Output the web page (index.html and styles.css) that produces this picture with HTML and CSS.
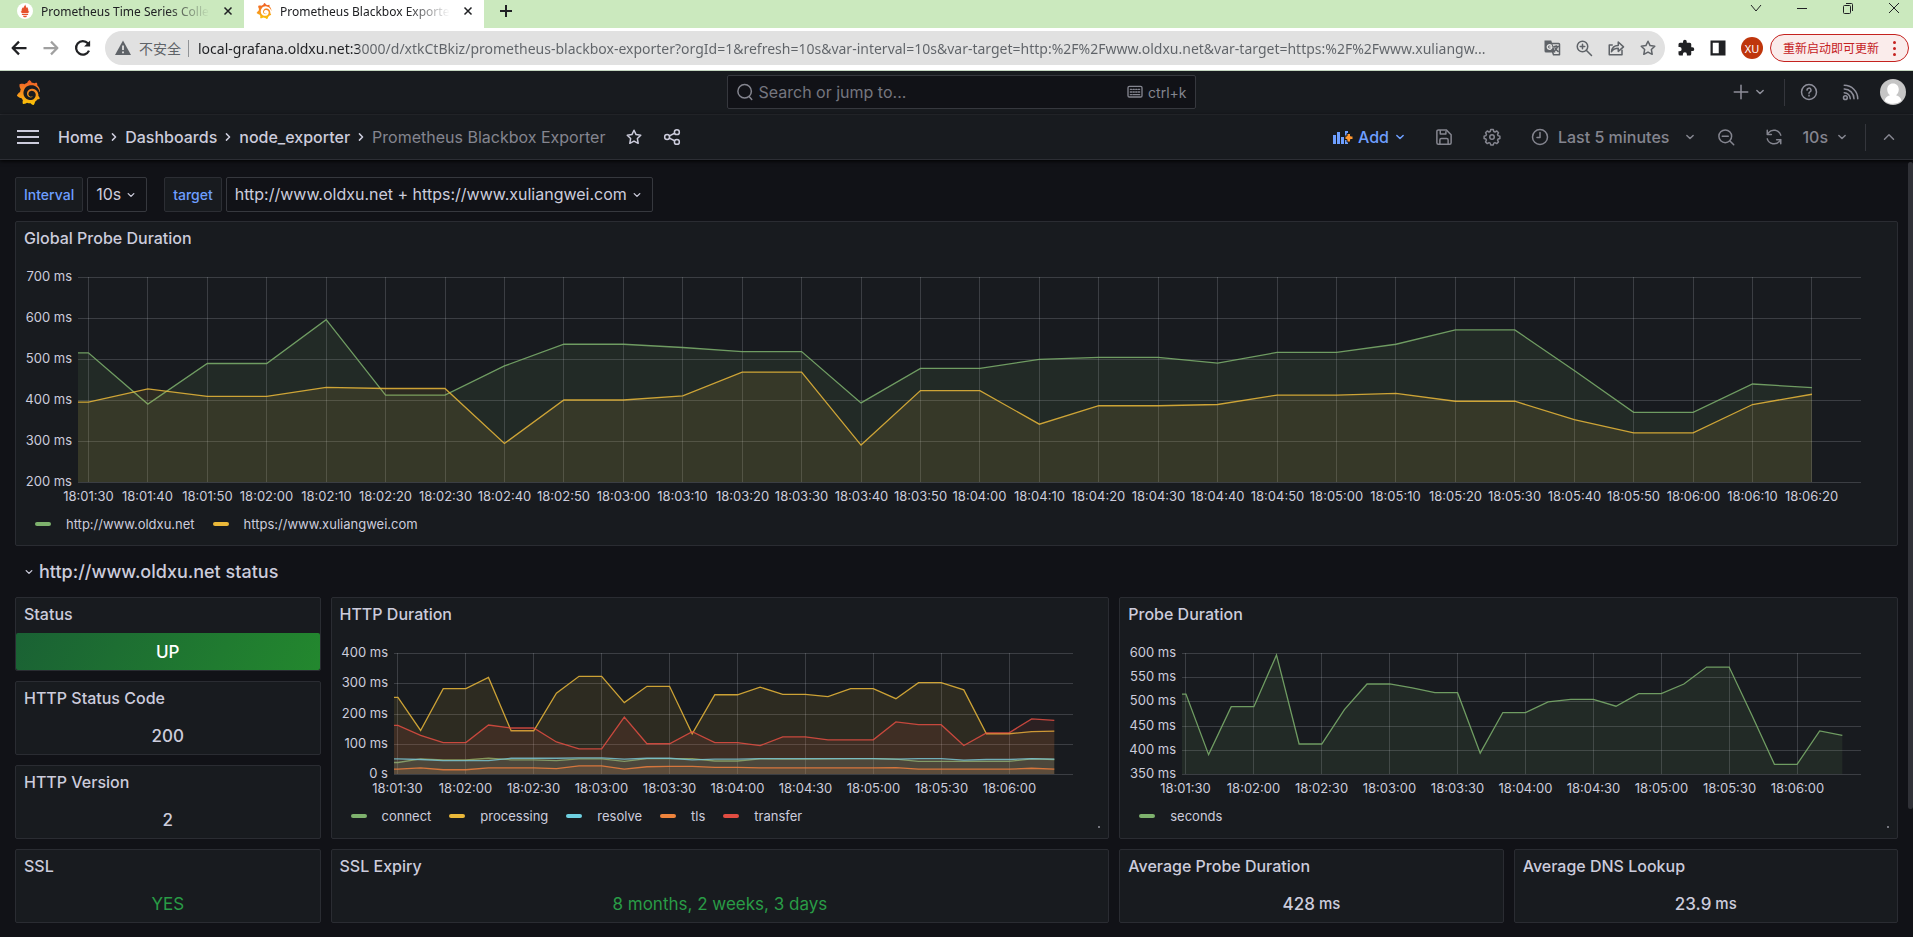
FILE: index.html
```
<!DOCTYPE html>
<html lang="en">
<head>
    <meta charset="UTF-8">
    <meta name="viewport" content="width=device-width, initial-scale=1.0">
    <title>Prometheus Blackbox Exporter</title>
    <link rel="stylesheet" href="styles.css">
</head>
<body>
    <!-- shared icons -->
    <svg class="sprite" aria-hidden="true">
        <defs>
            <linearGradient id="grafana-fill" x1="0" y1="1" x2="0" y2="0">
                <stop offset="0" stop-color="#fcc804"/>
                <stop offset="0.45" stop-color="#f7941e"/>
                <stop offset="1" stop-color="#f05a28"/>
            </linearGradient>
            <symbol id="i-grafana" viewBox="0 0 24 24"><path fill="url(#grafana-fill)" d="M23.02 10.59a8.578 8.578 0 0 0-.862-3.034 8.911 8.911 0 0 0-1.789-2.445c.337-1.342-.413-2.505-.413-2.505-1.292-.08-2.113.4-2.416.62-.052-.02-.102-.044-.154-.064-.22-.089-.446-.172-.677-.247-.231-.073-.47-.14-.711-.197a9.867 9.867 0 0 0-.875-.161C14.557.753 12.94 0 12.94 0c-1.804 1.145-2.147 2.744-2.147 2.744l-.018.093c-.098.029-.2.057-.298.088-.138.042-.275.094-.413.143-.138.055-.275.107-.41.166a8.869 8.869 0 0 0-1.557.87l-.063-.029c-2.497-.955-4.716.195-4.716.195-.203 2.658.996 4.33 1.235 4.636a11.608 11.608 0 0 0-.607 2.635C1.636 12.677.953 15.014.953 15.014c1.926 2.214 4.171 2.351 4.171 2.351.003-.002.006-.002.006-.005.285.509.615.994.986 1.446.156.19.32.371.488.548-.704 2.009.099 3.68.099 3.68 2.144.08 3.553-.937 3.849-1.173a9.784 9.784 0 0 0 3.164.501h.08l.055-.003.107-.002.103-.005.003.002c1.01 1.44 2.788 1.646 2.788 1.646 1.264-1.332 1.337-2.653 1.337-2.94v-.058c0-.02-.003-.039-.003-.06.265-.187.52-.387.758-.6a7.875 7.875 0 0 0 1.415-1.7c1.43.083 2.437-.885 2.437-.885-.236-1.49-1.085-2.216-1.264-2.354l-.018-.013-.016-.013a.217.217 0 0 1-.031-.02c.008-.092.016-.18.02-.27.011-.162.016-.323.016-.48v-.253l-.005-.098-.008-.135a1.891 1.891 0 0 0-.01-.13c-.003-.042-.008-.083-.013-.125l-.016-.124-.018-.122a6.215 6.215 0 0 0-2.032-3.73 6.015 6.015 0 0 0-3.222-1.46 6.292 6.292 0 0 0-.85-.048l-.107.002h-.063l-.044.003-.104.008a4.777 4.777 0 0 0-3.335 1.695c-.332.4-.592.84-.768 1.297a4.594 4.594 0 0 0-.312 1.817l.003.091c.005.055.007.11.013.164a3.615 3.615 0 0 0 .698 1.82 3.53 3.53 0 0 0 1.827 1.282c.33.098.66.14.971.137.039 0 .078 0 .114-.002l.063-.003c.02 0 .041-.003.062-.003.034-.002.065-.007.099-.01.007 0 .018-.003.028-.003l.031-.005.06-.008a1.18 1.18 0 0 0 .112-.02c.036-.008.072-.013.109-.024a2.634 2.634 0 0 0 .914-.415c.028-.02.056-.041.085-.065a.248.248 0 0 0 .039-.35.244.244 0 0 0-.309-.06l-.078.042c-.09.044-.184.083-.283.116a2.476 2.476 0 0 1-.475.096c-.028.003-.054.006-.083.006l-.083.002c-.026 0-.054 0-.08-.002l-.102-.006h-.012l-.024.006c-.016-.003-.031-.003-.044-.006-.031-.002-.06-.007-.091-.01a2.59 2.59 0 0 1-.724-.213 2.557 2.557 0 0 1-.667-.438 2.52 2.52 0 0 1-.805-1.475 2.306 2.306 0 0 1-.029-.444l.006-.122v-.023l.002-.031c.003-.021.003-.04.005-.06a3.163 3.163 0 0 1 1.352-2.29 3.12 3.12 0 0 1 .937-.43 2.946 2.946 0 0 1 .776-.101h.06l.07.002.045.003h.026l.07.005a4.041 4.041 0 0 1 1.635.49 3.94 3.94 0 0 1 1.602 1.662 3.77 3.77 0 0 1 .397 1.414l.005.076.003.075c.002.026.002.05.002.075 0 .024.003.052 0 .07v.065l-.002.073-.008.174a6.195 6.195 0 0 1-.08.639 5.1 5.1 0 0 1-.267.927 5.31 5.31 0 0 1-.624 1.13 5.052 5.052 0 0 1-3.237 2.014 4.82 4.82 0 0 1-.649.066l-.039.003h-.287a6.607 6.607 0 0 1-1.716-.265 6.776 6.776 0 0 1-3.4-2.274 6.75 6.75 0 0 1-.746-1.15 6.616 6.616 0 0 1-.714-2.596l-.005-.083-.002-.02v-.056l-.003-.073v-.096l-.003-.104v-.07l.003-.163c.008-.22.026-.45.054-.678a8.707 8.707 0 0 1 .28-1.355c.128-.444.286-.872.473-1.277a7.04 7.04 0 0 1 1.456-2.1 5.925 5.925 0 0 1 .953-.763c.169-.111.343-.213.524-.306.089-.05.182-.091.273-.135.047-.02.093-.042.138-.062a7.177 7.177 0 0 1 .714-.267l.145-.045c.049-.015.098-.026.148-.041.098-.029.197-.052.296-.076.049-.013.1-.02.15-.033l.15-.032.151-.028.076-.013.075-.01.153-.024c.057-.01.114-.013.171-.023l.169-.021c.036-.003.073-.008.106-.01l.073-.008.036-.003.042-.002c.057-.003.114-.008.171-.01l.086-.006h.023l.037-.003.145-.007a7.999 7.999 0 0 1 1.708.125 7.917 7.917 0 0 1 2.048.68 8.253 8.253 0 0 1 1.672 1.09l.09.077.089.078c.06.052.114.107.171.159.057.052.112.106.166.16.052.055.107.107.159.164a8.671 8.671 0 0 1 1.41 1.978c.012.026.028.052.04.078l.04.078.075.156c.023.051.05.1.07.153l.065.15a8.848 8.848 0 0 1 .45 1.34.19.19 0 0 0 .201.142.186.186 0 0 0 .172-.184c.01-.246.002-.532-.024-.856z"/></symbol>
            <symbol id="i-down" viewBox="0 0 24 24"><path d="M7.8 9.9l4.2 4.2 4.2-4.2"/></symbol>
            <symbol id="i-up" viewBox="0 0 24 24"><path d="M6 15l6-6 6 6"/></symbol>
            <symbol id="i-right" viewBox="0 0 24 24"><path d="M9.9 7.8l4.2 4.2-4.2 4.2"/></symbol>
            <symbol id="i-star" viewBox="0 0 24 24"><path d="M12 3l2.8 5.8 6.2.9-4.5 4.4 1.1 6.3L12 17.400l-5.600 3 1.100-6.300L3 9.700l6.200-.9z"/></symbol>
            <symbol id="i-close" viewBox="0 0 24 24"><path d="M5 5l14 14M19 5L5 19"/></symbol>
            <symbol id="i-plus" viewBox="0 0 24 24"><path d="M12 3v18M3 12h18"/></symbol>
        </defs>
    </svg>

    <!-- browser tabs -->
    <div class="tab-strip">
        <button class="tab">
            <svg class="favicon" viewBox="0 0 16 16"><circle cx="8" cy="8" r="8" fill="#fff"/><path fill="#e6522c" d="M8.200 1.500c.3 1.700 1.300 2.200 1.300 3.500.5-.3.6-.9.6-.9.900 1.500 1.400 2.500 1.200 4.400l1-.5c-.2 1-.7 1.700-1.300 2.200H5c-.700-.6-1.100-1.300-1.300-2.200l1 .4c-.3-1.700.3-2.900 1.100-4.100 0 0 .1.700.5.9.1-1.300 1.500-2 1.900-3.700zM4.900 11h6.200v1.100H4.900zM6 12.800h4c-.2 1-.9 1.500-2 1.500s-1.800-.5-2-1.500z"/></svg>
            <span class="tab-title">Prometheus Time Series Colle</span>
            <svg class="icon bold tab-close"><use href="#i-close"/></svg>
        </button>
        <button class="tab active">
            <svg class="favicon"><use href="#i-grafana"/></svg>
            <span class="tab-title">Prometheus Blackbox Exporte</span>
            <svg class="icon bold tab-close"><use href="#i-close"/></svg>
        </button>
        <button class="new-tab" aria-label="New tab"><svg class="icon bold"><use href="#i-plus"/></svg></button>
        <div class="window-controls">
            <button aria-label="Search tabs"><svg viewBox="0 0 12 12"><path d="M1 3l5 6 5-6"/></svg></button>
            <button aria-label="Minimize"><svg viewBox="0 0 12 12"><path d="M1 6.500h10"/></svg></button>
            <button aria-label="Restore"><svg viewBox="0 0 12 12"><rect x="1.500" y="3.500" width="7" height="8" rx="1"/><path d="M4 1.500h5.500a1 1 0 0 1 1 1V9"/></svg></button>
            <button aria-label="Close"><svg viewBox="0 0 12 12"><path d="M1 1l10 10M11 1L1 11"/></svg></button>
        </div>
    </div>

    <!-- address bar -->
    <div class="browser-bar">
        <div class="browser-nav">
            <button aria-label="Back"><svg class="icon bold" viewBox="0 0 24 24"><path d="M22 12H4M12 3.500L3.500 12l8.500 8.500"/></svg></button>
            <button aria-label="Forward" class="faded"><svg class="icon bold" viewBox="0 0 24 24"><path d="M2 12h18M12 3.500l8.500 8.500-8.500 8.500"/></svg></button>
            <button aria-label="Reload"><svg class="icon bold" viewBox="0 0 24 24"><path d="M20 15.500A9 9 0 1 1 18.500 5.800L20.500 8"/><path d="M21.500 2v8h-8z" fill="currentColor" stroke="none"/></svg></button>
        </div>
        <div class="address">
            <svg class="warn" viewBox="0 0 18 18"><path fill="#5f6368" d="M9 1.500l8 14.500H1z"/><path stroke="#e1e1e1" stroke-width="1.800" d="M9 6.500v4.500M9 12.500v1.800"/></svg>
            <label class="insecure" for="url">不安全</label>
            <input id="url" class="url" type="text" value="local-grafana.oldxu.net:3000/d/xtkCtBkiz/prometheus-blackbox-exporter?orgId=1&amp;refresh=10s&amp;var-interval=10s&amp;var-target=http:%2F%2Fwww.oldxu.net&amp;var-target=https:%2F%2Fwww.xuliangw...">
            <div class="address-actions">
                <button aria-label="Translate"><svg class="icon" viewBox="0 0 24 24"><path fill="currentColor" stroke="none" d="M2 2h9l5.500 16H4a2 2 0 0 1-2-2z"/><path d="M12 6h9a1 1 0 0 1 1 1v14H14l-1-3M14.500 10h6M17.500 9v1M19.500 10c-1 3-3 5-4 6M16 12c1 2 2 3 4 4.500"/><path stroke="#e1e1e1" d="M11 8.500a3 3 0 1 0 .8 2.300H9"/></svg></button>
                <button aria-label="Zoom"><svg class="icon" viewBox="0 0 24 24"><circle cx="10" cy="10" r="7"/><path d="M15 15l7 7M10 7v6M7 10h6"/></svg></button>
                <button aria-label="Share"><svg class="icon" viewBox="0 0 24 24"><path d="M7 8H3v13h17v-6"/><path d="M6 17c.5-6 4-8.500 9-8.500V4l7 6.500-7 6v-4.300c-4 0-7 1.300-9 4.800z"/></svg></button>
                <button aria-label="Bookmark"><svg class="icon"><use href="#i-star"/></svg></button>
            </div>
        </div>
        <div class="browser-tools">
            <button aria-label="Extensions"><svg class="icon" viewBox="0 0 24 24"><path fill="currentColor" stroke="none" d="M20.500 11H19V7a2 2 0 0 0-2-2h-4V3.500a2.500 2.500 0 0 0-5 0V5H4a2 2 0 0 0-2 2v3.800h1.500a2.700 2.700 0 0 1 0 5.400H2V20a2 2 0 0 0 2 2h3.800v-1.500a2.700 2.700 0 0 1 5.400 0V22H17a2 2 0 0 0 2-2v-4h1.500a2.500 2.500 0 0 0 0-5z"/></svg></button>
            <button aria-label="Side panel"><svg class="icon" viewBox="0 0 24 24"><path fill="currentColor" stroke="none" d="M2 2h20v20H2zM5 5v14h8V5z" fill-rule="evenodd"/></svg></button>
            <button class="profile">XU</button>
            <button class="update">重新启动即可更新 <span class="dots"><i></i><i></i><i></i></span></button>
        </div>
    </div>

    <!-- grafana top bar -->
    <header class="top-bar">
        <a class="logo" href="#" aria-label="Grafana"><svg><use href="#i-grafana"/></svg></a>
        <label class="search">
            <svg class="icon" viewBox="0 0 24 24"><circle cx="11.500" cy="11" r="9"/><path d="M17.500 18l3.500 4"/></svg>
            <input type="text" placeholder="Search or jump to...">
            <svg class="icon keyboard" viewBox="0 0 24 24"><rect x="1.500" y="3.500" width="21" height="16" rx="2"/><path d="M5 8h2M9 8h2M13 8h2M17 8h2M5 12h2M9 12h2M13 12h2M17 12h2M5 16h2M9 16h10"/></svg>
            <span>ctrl+k</span>
        </label>
        <div class="top-actions">
            <button class="new-btn" aria-label="New"><svg class="icon"><use href="#i-plus"/></svg><svg class="icon"><use href="#i-down"/></svg></button>
            <span class="divider"></span>
            <button aria-label="Help"><svg class="icon" viewBox="0 0 24 24"><circle cx="12" cy="12" r="10"/><path d="M9.300 9.500a2.700 2.700 0 1 1 4 2.400c-.9.500-1.300.9-1.300 1.800M12 16.200v1"/></svg></button>
            <button class="news" aria-label="News"><svg class="icon" viewBox="0 0 24 24"><circle cx="4.500" cy="19.500" r="2.500"/><path d="M3 13a8 8 0 0 1 8 8M3 8a13 13 0 0 1 13 13M3 3a18 18 0 0 1 18 18"/></svg></button>
            <button class="avatar" aria-label="Profile"><svg viewBox="0 0 26 26"><circle cx="13" cy="13" r="13" fill="#c5c5c5"/><path fill="#fff" d="M13 4.500c3.500 0 5.800 2.600 5.800 6 0 2.600-1.300 4.600-2.800 5.800 3 .8 5 2.500 5.500 5.400a13 13 0 0 1-17 0c.5-2.900 2.500-4.600 5.500-5.400-1.500-1.200-2.800-3.200-2.800-5.800 0-3.400 2.300-6 5.800-6z"/></svg></button>
        </div>
    </header>

    <!-- breadcrumbs and toolbar -->
    <nav class="nav-bar">
        <button class="menu" aria-label="Menu"><i></i><i></i><i></i></button>
        <div class="crumbs">
            <a href="#">Home</a><svg class="icon"><use href="#i-right"/></svg>
            <a href="#">Dashboards</a><svg class="icon"><use href="#i-right"/></svg>
            <a href="#">node_exporter</a><svg class="icon"><use href="#i-right"/></svg>
            <span>Prometheus Blackbox Exporter</span>
        </div>
        <button class="mark" aria-label="Mark as favorite"><svg class="icon"><use href="#i-star"/></svg></button>
        <button class="mark" aria-label="Share dashboard"><svg class="icon" viewBox="0 0 24 24"><circle cx="5.500" cy="12" r="3.300"/><circle cx="18.500" cy="5.500" r="3.300"/><circle cx="18.500" cy="18.500" r="3.300"/><path d="M8.500 10.500l7-3.500M8.500 13.500l7 3.500"/></svg></button>
        <div class="toolbar">
            <button class="add"><svg class="add-icon" viewBox="0 0 20 16"><path fill="#6e9fff" d="M0 6h3v9H0zM4 3h3v12H4zM8 8h3v7H8zM12 2h3v13h-3z"/><path fill="#ff9830" stroke="#181b1f" d="M14 4.500h3.500V7H20v3.500h-2.500V13H14v-2.500h-2V7h2z"/></svg>Add<svg class="icon"><use href="#i-down"/></svg></button>
            <button aria-label="Save dashboard"><svg class="icon" viewBox="0 0 24 24"><path d="M15 2.500H4.500a2 2 0 0 0-2 2v15a2 2 0 0 0 2 2h15a2 2 0 0 0 2-2V9zM7 2.500V8h7.500V5M6.500 21.500V16a2 2 0 0 1 2-2h7a2 2 0 0 1 2 2v5.500"/></svg></button>
            <button aria-label="Dashboard settings"><svg class="icon" viewBox="0 0 24 24"><circle cx="12" cy="12" r="3"/><path d="M10.300 2h3.400l.7 2.600 1.600.7 2.400-1.300 2.300 2.300L19.400 8.600l.7 1.600 2.400.7v3l-2.400.7-.7 1.600 1.200 2.300-2.300 2.300-2.300-1.300-1.600.7-.7 2.300h-3.400l-.7-2.300-1.600-.7-2.300 1.300-2.300-2.300 1.200-2.300-.7-1.600-2.400-.7v-3l2.400-.7.7-1.600-1.200-2.300L5.700 4 8 5.300l1.600-.7z"/></svg></button>
            <button class="time"><svg class="icon" viewBox="0 0 24 24"><circle cx="12" cy="12" r="10"/><path d="M12 6v6.500H8"/></svg>Last 5 minutes<svg class="icon"><use href="#i-down"/></svg></button>
            <button aria-label="Zoom out"><svg class="icon" viewBox="0 0 24 24"><circle cx="11" cy="11" r="8.500"/><path d="M17.300 17.300l5 5M7 11h8"/></svg></button>
            <button class="refresh"><svg class="icon" viewBox="0 0 24 24"><path d="M21 9.500A9.500 9.500 0 0 0 4.500 6.500L3 8.500M3 3v5.500h5.500M3 14.500a9.500 9.500 0 0 0 16.500 3l1.500-2M21 21v-5.500h-5.500"/></svg>10s<svg class="icon"><use href="#i-down"/></svg></button>
            <span class="divider"></span>
            <button aria-label="Hide top bar"><svg class="icon"><use href="#i-up"/></svg></button>
        </div>
    </nav>

    <main class="dashboard">
        <div class="scroll-thumb"></div>

        <!-- template variables -->
        <div class="variables">
            <div class="variable">
                <label for="var-interval">Interval</label>
                <div class="picker">
                    <select id="var-interval"><option>10s</option></select>
                    <svg class="icon"><use href="#i-down"/></svg>
                </div>
            </div>
            <div class="variable">
                <label for="var-target">target</label>
                <div class="picker">
                    <select id="var-target"><option>http://www.oldxu.net + https://www.xuliangwei.com</option></select>
                    <svg class="icon"><use href="#i-down"/></svg>
                </div>
            </div>
        </div>

        <section class="panel global">
            <h2>Global Probe Duration</h2>
            <svg class="chart tall" data-chart="global"></svg>
            <ul class="legend">
                <li class="green">http://www.oldxu.net</li>
                <li class="yellow">https://www.xuliangwei.com</li>
            </ul>
        </section>

        <button class="row-title"><svg class="icon"><use href="#i-down"/></svg>http://www.oldxu.net status</button>

        <div class="grid">
            <section class="panel stat w4 up"><h2>Status</h2><div class="value">UP</div></section>
            <section class="panel w10 h3">
                <h2>HTTP Duration</h2>
                <svg class="chart" data-chart="http"></svg>
                <ul class="legend">
                    <li class="green">connect</li>
                    <li class="yellow">processing</li>
                    <li class="cyan">resolve</li>
                    <li class="orange">tls</li>
                    <li class="red">transfer</li>
                </ul>
                <span class="resize"></span>
            </section>
            <section class="panel w10 h3">
                <h2>Probe Duration</h2>
                <svg class="chart" data-chart="probe"></svg>
                <ul class="legend">
                    <li class="green">seconds</li>
                </ul>
                <span class="resize"></span>
            </section>
            <section class="panel stat w4"><h2>HTTP Status Code</h2><div class="value">200</div></section>
            <section class="panel stat w4"><h2>HTTP Version</h2><div class="value">2</div></section>
            <section class="panel stat w4 ok"><h2>SSL</h2><div class="value">YES</div></section>
            <section class="panel stat w10 ok"><h2>SSL Expiry</h2><div class="value">8 months, 2 weeks, 3 days</div></section>
            <section class="panel stat w5"><h2>Average Probe Duration</h2><div class="value">428 <small>ms</small></div></section>
            <section class="panel stat w5"><h2>Average DNS Lookup</h2><div class="value">23.9 <small>ms</small></div></section>
        </div>
    </main>

    <script src="script.js"></script>
</body>
</html>
```
FILE: styles.css
```
* {
    margin: 0;
    padding: 0;
    box-sizing: border-box;
}

body {
    background-color: #111217;
    color: #ccccdc;
    font-family: Inter, "Liberation Sans", sans-serif;
    font-size: 16px;
    display: flex;
    flex-direction: column;
    min-height: 100vh;
    overflow: hidden;
}

button,
input,
select {
    font: inherit;
    color: inherit;
    background: none;
    border: none;
    outline: none;
}

button {
    display: flex;
    align-items: center;
    cursor: pointer;
}

a {
    color: inherit;
    text-decoration: none;
}

.sprite {
    position: absolute;
    width: 0;
    height: 0;
}

.icon {
    width: 18px;
    height: 18px;
    flex-shrink: 0;
    fill: none;
    stroke: currentColor;
    stroke-width: 2;
    stroke-linecap: round;
    stroke-linejoin: round;
}

.icon.bold {
    stroke-width: 3;
    stroke-linecap: butt;
}

.divider {
    width: 1px;
    height: 27px;
    background-color: #34363c;
}

/* browser tabs */
.tab-strip {
    display: flex;
    height: 28px;
    overflow: hidden;
    background-color: #cbe9be;
    font-family: "Noto Sans", "Noto Sans CJK SC", sans-serif;
    font-size: 12px;
    color: #202124;
}

.tab {
    width: 240px;
    height: 28px;
    padding: 0 10px 6px 12px;
    border-radius: 0 0 8px 0;
}

.tab:first-child {
    width: 244px;
    padding-left: 17px;
}

.tab.active {
    background-color: #ffffff;
    border-radius: 0;
}

.favicon {
    width: 16px;
    height: 16px;
    flex-shrink: 0;
}

.tab-title {
    flex: 1;
    margin: 0 12px 0 8px;
    text-align: left;
    white-space: nowrap;
    -webkit-mask-image: linear-gradient(to left, transparent, #000 44px);
    mask-image: linear-gradient(to left, transparent, #000 44px);
}

.tab-close {
    width: 12px;
    height: 12px;
}

.new-tab {
    padding: 0 14px 6px;
}

.new-tab .icon {
    width: 16px;
    height: 16px;
}

.window-controls {
    display: flex;
    margin-left: auto;
    margin-right: -4px;
}

.window-controls button {
    width: 46px;
    padding-bottom: 12px;
    justify-content: center;
}

.window-controls svg {
    width: 12px;
    height: 12px;
    fill: none;
    stroke: #202124;
}

/* address bar */
.browser-bar {
    display: flex;
    align-items: center;
    height: 43px;
    padding: 0 4px 2px 10px;
    background-color: #ffffff;
    border-bottom: 1px solid #c4d6c0;
    font-family: "Noto Sans", "Noto Sans CJK SC", sans-serif;
    font-size: 14px;
    color: #202124;
}

.browser-nav {
    display: flex;
    gap: 14px;
    margin-right: 13px;
}

.browser-nav .faded {
    color: #a0a0a0;
}

.address {
    display: flex;
    flex: 1;
    align-items: center;
    height: 34px;
    padding: 0 8px 0 9px;
    border-radius: 17px;
    background-color: #e1e1e1;
    color: #5f6368;
}

.warn {
    width: 18px;
    height: 18px;
    margin-right: 7px;
}

.insecure {
    padding-right: 7px;
    border-right: 1px solid #909396;
    line-height: 17px;
}

/* host part is darker than the path */
.url {
    flex: 1;
    margin: 0 16px 0 9px;
    background: linear-gradient(to right, #202124 161px, #5f6368 161px);
    -webkit-background-clip: text;
    background-clip: text;
    color: transparent;
    text-overflow: ellipsis;
}

.address-actions {
    display: flex;
    gap: 14px;
}

.browser-tools {
    display: flex;
    align-items: center;
    gap: 14px;
    margin-left: 12px;
}

.profile {
    width: 22px;
    height: 22px;
    justify-content: center;
    border-radius: 50%;
    background-color: #bf360c;
    color: #ffffff;
    font-size: 11px;
}

.update {
    height: 28px;
    margin-left: -7px;
    padding: 0 12px;
    gap: 14px;
    border: 1px solid #c5221f;
    border-radius: 14px;
    background-color: #faeceb;
    color: #c5221f;
    font-size: 12px;
}

.dots {
    display: flex;
    flex-direction: column;
    gap: 3px;
}

.dots i {
    width: 3px;
    height: 3px;
    border-radius: 50%;
    background-color: #c5221f;
}

/* grafana top bar */
.top-bar,
.nav-bar {
    background-color: #181b1f;
    border-bottom: 1px solid #2c2e34;
}

.top-bar {
    display: grid;
    grid-template-columns: 1fr 469px 1fr;
    align-items: center;
    height: 44px;
    padding: 0 7px 1px 16px;
}

.logo svg {
    display: block;
    width: 25px;
    height: 27px;
}

.search {
    display: flex;
    align-items: center;
    height: 34px;
    padding: 0 8px;
    border: 1px solid #36383e;
    border-radius: 2px;
    background-color: #111217;
    color: #84858f;
}

.search input {
    flex: 1;
    margin-left: 5px;
}

.search input::placeholder {
    color: #75767f;
}

.search span {
    margin-left: 5px;
    font-size: 14px;
}

.keyboard {
    width: 16px;
    height: 16px;
}

.top-actions {
    display: flex;
    align-items: center;
    justify-content: flex-end;
    color: #8e8f9a;
}

.top-actions .divider {
    margin: 0 15px;
}

.top-actions button {
    margin-right: 24px;
}

.top-actions .news {
    margin-right: 20px;
}

.top-actions .new-btn,
.top-actions .avatar {
    margin-right: 0;
}

.new-btn .icon:last-child {
    margin-left: 1px;
}

.avatar svg {
    width: 26px;
    height: 26px;
}

/* breadcrumbs and toolbar */
.nav-bar {
    display: flex;
    align-items: center;
    height: 45px;
    padding: 0 15px 0 17px;
    box-shadow: 0 1px 4px #000000;
}

.menu {
    flex-direction: column;
    gap: 4px;
    margin-right: 19px;
}

.menu i {
    width: 22px;
    height: 2px;
    background-color: #ccccdc;
}

.crumbs {
    display: flex;
    align-items: center;
    gap: 2px;
    font-weight: 500;
}

.crumbs span {
    font-weight: 400;
    color: #84858f;
}

.mark {
    margin-left: 20px;
}

.toolbar {
    display: flex;
    align-items: center;
    gap: 30px;
    margin-left: auto;
    color: #84858f;
    font-weight: 500;
}

.toolbar .add {
    gap: 5px;
    margin-right: -4px;
    color: #6e9fff;
}

.add .icon {
    margin-left: -3px;
}

.add-icon {
    width: 20px;
    height: 16px;
}

.time {
    gap: 9px;
    margin-right: -12px;
}

.time .icon:last-child {
    margin-left: 3px;
}

.refresh {
    gap: 5px;
    margin-right: -16px;
}

.refresh .icon:first-child {
    margin-right: 14px;
}

.toolbar .divider {
    margin-right: -16px;
}

/* dashboard */
.dashboard {
    position: relative;
    flex: 1;
    padding: 17px 15px 14px;
}

.scroll-thumb {
    position: absolute;
    top: 2px;
    right: 0;
    width: 5px;
    height: 647px;
    border-radius: 3px;
    background-color: #303137;
}

.variables {
    display: flex;
    gap: 17px;
    margin-bottom: 9px;
}

.variable {
    display: flex;
    gap: 4px;
}

.variable label {
    height: 35px;
    padding: 0 8px;
    border: 1px solid #2c2e34;
    border-radius: 2px;
    background-color: #181b1f;
    color: #6e9fff;
    font-size: 14px;
    font-weight: 500;
    line-height: 33px;
}

.picker {
    position: relative;
    display: flex;
    align-items: center;
    height: 35px;
    border: 1px solid #36383e;
    border-radius: 2px;
}

.picker select {
    height: 33px;
    padding: 0 24px 2px 8px;
    appearance: none;
}

.picker .icon {
    position: absolute;
    right: 7px;
    width: 16px;
    height: 16px;
    pointer-events: none;
}

.panel {
    position: relative;
    display: flex;
    flex-direction: column;
    border: 1px solid #2a2c32;
    border-radius: 2px;
    background-color: #181b1f;
}

.panel h2 {
    height: 35px;
    padding: 0 8px;
    font-size: 16px;
    font-weight: 500;
    line-height: 32px;
}

.chart {
    display: block;
    width: 100%;
    height: 168px;
}

.chart.tall {
    height: 252px;
}

.chart text {
    fill: #ccccdc;
    font-size: 13px;
}

.chart .axis {
    stroke: rgba(240, 250, 255, 0.16);
}

.chart .line {
    fill: none;
    stroke-width: 1.3;
    stroke-opacity: 0.85;
}

.legend {
    display: flex;
    gap: 18px;
    padding: 5px 19px;
    list-style: none;
    font-size: 13px;
    line-height: 20px;
}

.global .legend {
    padding-bottom: 11px;
}

.legend li {
    display: flex;
    align-items: center;
    gap: 15px;
}

.legend li::before {
    content: "";
    width: 16px;
    height: 4px;
    border-radius: 2px;
    background-color: var(--swatch);
}

.green { --swatch: #7eb26d; }
.yellow { --swatch: #eab839; }
.cyan { --swatch: #6ed0e0; }
.orange { --swatch: #ef843c; }
.red { --swatch: #e24d42; }

.resize {
    position: absolute;
    right: 8px;
    bottom: 10px;
    width: 2px;
    height: 2px;
    background-color: #73747c;
}

.row-title {
    height: 51px;
    padding: 0 6px;
    font-size: 18px;
    font-weight: 500;
}

.row-title .icon {
    width: 16px;
    height: 16px;
    margin-right: 2px;
}

.grid {
    display: grid;
    grid-template-columns: repeat(24, 1fr);
    grid-auto-rows: 74px;
    gap: 10px;
}

.w4 { grid-column: span 4; }
.w5 { grid-column: span 5; }
.w10 { grid-column: span 10; }
.h3 { grid-row: span 3; }

.stat .value {
    display: flex;
    flex: 1;
    align-items: center;
    justify-content: center;
    gap: 4px;
    font-size: 17px;
    font-weight: 500;
}

.value small {
    font-size: 15px;
}

.up .value {
    border-radius: 2px;
    background: linear-gradient(120deg, #1a6134, #23882e);
    color: #ffffff;
}

.ok .value {
    color: #299c46;
    font-weight: 400;
}
```
FILE: script.js
```
const colors = {
    green: '#7eb26d',
    yellow: '#eab839',
    cyan: '#6ed0e0',
    orange: '#ef843c',
    red: '#e24d42'
};

// one sample every 10s, starting at 18:01:30, values in ms
const probe = [515, 390, 489, 489, 596, 412, 412, 483, 536, 536, 528, 518, 518, 393, 477, 477, 499, 504, 504, 490, 516, 516, 536, 571, 571, 472, 370, 370, 439, 430];

const charts = {
    global: {
        min: 200, max: 700, step: 100, tick: 10,
        series: [
            ['green', probe],
            ['yellow', [395, 427, 409, 409, 431, 428, 428, 294, 400, 400, 410, 468, 468, 290, 423, 423, 341, 386, 386, 389, 412, 412, 416, 397, 397, 352, 320, 320, 389, 414]]
        ]
    },
    http: {
        min: 0, max: 400, step: 100, tick: 30,
        series: [
            ['green', [38, 50, 47, 47, 52, 47, 47, 44, 50, 50, 42, 51, 51, 51, 43, 43, 50, 49, 49, 50, 51, 51, 49, 42, 42, 42, 42, 42, 50, 48]],
            ['yellow', [253, 144, 282, 282, 319, 143, 143, 267, 323, 323, 236, 290, 290, 133, 262, 262, 287, 263, 263, 256, 282, 282, 249, 302, 302, 278, 133, 133, 140, 142]],
            ['cyan', [50, 48, 44, 44, 44, 52, 52, 52, 53, 53, 49, 52, 52, 47, 49, 49, 51, 51, 51, 51, 51, 51, 49, 51, 51, 46, 48, 48, 51, 49]],
            ['orange', [16, 20, 14, 14, 20, 20, 20, 18, 27, 27, 16, 24, 25, 25, 22, 22, 20, 20, 20, 20, 20, 20, 21, 16, 16, 16, 16, 16, 19, 16]],
            ['red', [161, 128, 104, 104, 162, 152, 152, 106, 83, 83, 188, 100, 100, 140, 104, 104, 94, 123, 123, 113, 113, 113, 172, 163, 163, 94, 136, 136, 182, 177]]
        ]
    },
    probe: {
        min: 350, max: 600, step: 50, tick: 30,
        series: [['green', probe]]
    }
};

const firstSample = 90;
const rangeStart = 88.25;
const rangeLength = 300;

function timeLabel(seconds) {
    const pad = n => String(n).padStart(2, '0');
    return '18:' + pad(Math.floor(seconds / 60)) + ':' + pad(seconds % 60);
}

function drawChart(svg) {
    const chart = charts[svg.dataset.chart];
    const width = svg.clientWidth;
    const left = 62;
    const right = width - 36;
    const top = 20;
    const bottom = svg.clientHeight - 27;
    const x = t => left + (t - rangeStart) / rangeLength * (right - left);
    const y = v => bottom - (v - chart.min) / (chart.max - chart.min) * (bottom - top);
    let out = '';

    for (let v = chart.min; v <= chart.max; v += chart.step) {
        const ly = Math.round(y(v)) + 0.5;
        out += `<path class="axis" d="M${left} ${ly}H${right}"/>`;
        out += `<text x="${left - 6}" y="${ly + 3}" text-anchor="end">${v === 0 ? '0 s' : v + ' ms'}</text>`;
    }

    const lastSample = firstSample + (probe.length - 1) * 10;
    for (let t = firstSample; t <= lastSample; t += chart.tick) {
        const lx = Math.floor(x(t)) + 0.5;
        out += `<path class="axis" d="M${lx} ${top}V${bottom}"/>`;
        out += `<text x="${lx}" y="${bottom + 19}" text-anchor="middle">${timeLabel(t)}</text>`;
    }

    chart.series.forEach(([color, values]) => {
        let line = `M${left} ${y(values[0])}`;
        values.forEach((v, i) => {
            line += `L${x(firstSample + i * 10)} ${y(v)}`;
        });
        out += `<path d="${line}V${bottom}H${left}Z" fill="${colors[color]}" fill-opacity="0.1"/>`;
        out += `<path class="line" d="${line}" stroke="${colors[color]}"/>`;
    });

    svg.innerHTML = out;
}

function drawAll() {
    document.querySelectorAll('.chart').forEach(drawChart);
}

window.addEventListener('resize', drawAll);
drawAll();
```
